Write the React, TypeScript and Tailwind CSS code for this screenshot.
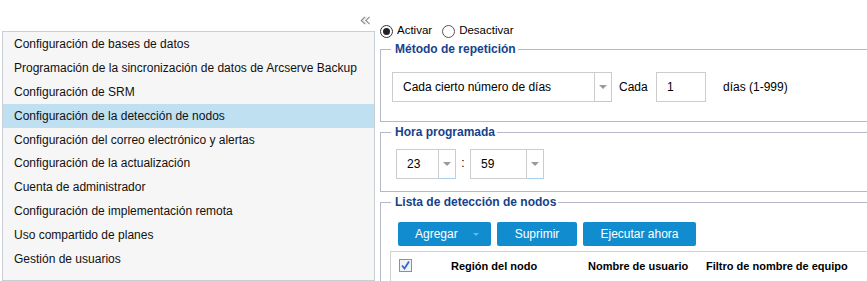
import React from "react";

const items = [
  "Configuración de bases de datos",
  "Programación de la sincronización de datos de Arcserve Backup",
  "Configuración de SRM",
  "Configuración de la detección de nodos",
  "Configuración del correo electrónico y alertas",
  "Configuración de la actualización",
  "Cuenta de administrador",
  "Configuración de implementación remota",
  "Uso compartido de planes",
  "Gestión de usuarios",
];

function Arrow({ color = "#9a9a9a" }: { color?: string }) {
  return (
    <svg width="8" height="4" viewBox="0 0 8 4">
      <path d="M0 0 L8 0 L4 4 Z" fill={color} />
    </svg>
  );
}

function Combo({ value, textW, pl }: { value: string; textW: string; pl: string }) {
  return (
    <div className="flex h-[30px]">
      <div className={`${textW} ${pl} h-full flex items-center border-y border-l border-[#cccccc] bg-white`}>
        {value}
      </div>
      <div className="w-[18px] h-full flex items-center justify-center border-l border-t border-r border-[#cccccc] border-b border-b-[#a9cff0] bg-white">
        <Arrow />
      </div>
    </div>
  );
}

export default function App() {
  return (
    <div className="w-[867px] h-[281px] overflow-hidden bg-white flex text-[12px] text-black font-['Liberation_Sans',Arial,sans-serif]">
      {/* Left column */}
      <div className="w-[375px] shrink-0 pl-[2px] flex flex-col">
        <div className="h-[31px] shrink-0 flex justify-end items-start pt-[16px] pr-[4px]">
          <svg width="11" height="9" viewBox="0 0 11 9">
            <path d="M5 0.8 L1.2 4.5 L5 8.2" fill="none" stroke="#8c8c8c" strokeWidth="1.1" />
            <path d="M6.6 0.8 L2.9 4.5 L6.6 8.2" fill="none" stroke="#c4c4c4" strokeWidth="0.9" />
            <path d="M9.6 0.8 L5.8 4.5 L9.6 8.2" fill="none" stroke="#8c8c8c" strokeWidth="1.1" />
          </svg>
        </div>
        <div className="flex-1 border border-[#c8ced6] bg-[#f6f6f6]">
          {items.map((t, i) => (
            <div
              key={t}
              className={`h-[23.9px] flex items-center pl-[11px] text-[#111] ${
                i === 3 ? "bg-[#bfe0f1]" : ""
              }`}
            >
              {t}
            </div>
          ))}
        </div>
      </div>

      {/* Right column */}
      <div className="ml-[5px] w-[540px] shrink-0 pt-[23px]">
        <div className="h-4 flex items-center text-[11.5px]">
          <span className="w-[13px] h-[13px] rounded-full border border-[#333] flex items-center justify-center">
            <span className="w-[7px] h-[7px] rounded-full bg-[#222]" />
          </span>
          <span className="ml-[4px]">Activar</span>
          <span className="ml-[10px] w-[13px] h-[13px] rounded-full border border-[#555]" />
          <span className="ml-[4px]">Desactivar</span>
        </div>

        <fieldset className="mt-[2px] border border-[#b5b8c8] pb-[19px]">
          <legend className="ml-[10px] pl-[4px] pr-[2px] font-bold text-[#15428b] leading-4">
            Método de repetición
          </legend>
          <div className="pt-[15px] pl-[11px] flex items-center">
            <Combo value="Cada cierto número de días" textW="w-[202px]" pl="pl-[10px]" />
            <span className="ml-[7px] w-[37px]">Cada</span>
            <div className="w-[50px] h-[30px] border border-[#cccccc] flex items-center pl-[10px]">1</div>
            <span className="ml-[17px]">días (1-999)</span>
          </div>
        </fieldset>

        <fieldset className="mt-[2px] border border-[#b5b8c8] pb-[12px]">
          <legend className="ml-[10px] pl-[4px] pr-[2px] font-bold text-[#15428b] leading-4">
            Hora programada
          </legend>
          <div className="pt-[9px] pl-[15px] flex items-center">
            <Combo value="23" textW="w-[42px]" pl="pl-[10px]" />
            <span className="w-[14px] text-center -mt-[2px]">:</span>
            <Combo value="59" textW="w-[56px]" pl="pl-[10px]" />
          </div>
        </fieldset>

        <fieldset className="mt-[2px] border border-[#b5b8c8] h-[120px]">
          <legend className="ml-[10px] pl-[4px] pr-[2px] font-bold text-[#15428b] leading-4">
            Lista de detección de nodos
          </legend>
          <div className="pt-[12px] pl-[9px]">
            <div className="ml-[8px] flex gap-[6px]">
              <button className="w-[93px] h-[24px] rounded-[2px] bg-[#118dcf] text-white flex items-center pl-[17px]">
                <span>Agregar</span>
                <span className="ml-[15px] mt-[1px]">
                  <svg width="6" height="3" viewBox="0 0 6 3">
                    <path d="M0 0 L6 0 L3 3 Z" fill="#66b9e6" />
                  </svg>
                </span>
              </button>
              <button className="w-[80px] h-[24px] rounded-[2px] bg-[#118dcf] text-white flex items-center justify-center">
                Suprimir
              </button>
              <button className="w-[113px] h-[24px] rounded-[2px] bg-[#118dcf] text-white flex items-center justify-center">
                Ejecutar ahora
              </button>
            </div>
            <div className="mt-[5px] border-l border-t border-[#d0d0d0] h-[40px] pt-[7px] pl-[8px] flex items-start font-bold text-[11px]">
              <div className="w-[52px] shrink-0">
                <svg width="13" height="13" viewBox="0 0 13 13">
                  <rect x="0.5" y="0.5" width="12" height="12" fill="#eef1f6" stroke="#8e9094" />
                  <path d="M3 6.5 L5.5 9.5 L10 2.5" fill="none" stroke="#3a62c8" strokeWidth="1.8" />
                </svg>
              </div>
              <div className="w-[137px] shrink-0 leading-[14px]">Región del nodo</div>
              <div className="w-[118px] shrink-0 leading-[14px]">Nombre de usuario</div>
              <div className="shrink-0 leading-[14px]">Filtro de nombre de equipo</div>
            </div>
          </div>
        </fieldset>
      </div>
    </div>
  );
}
